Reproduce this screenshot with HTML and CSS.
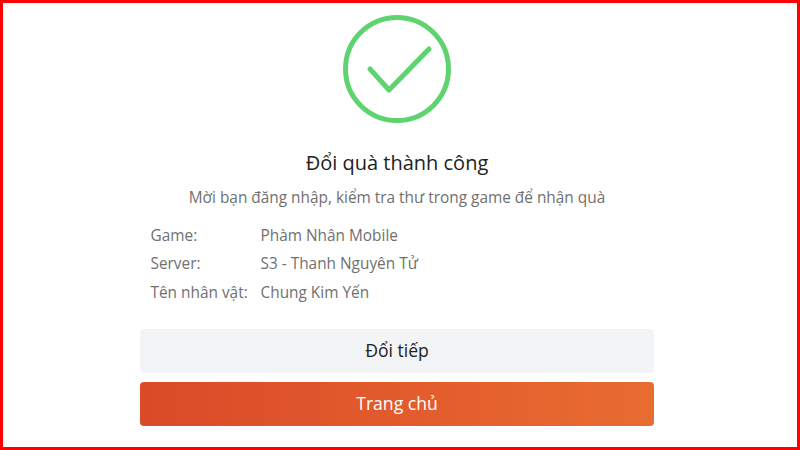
FILE: index.html
```html
<!DOCTYPE html>
<html lang="vi">
<head>
  <meta charset="UTF-8">
  <title>Đổi quà thành công</title>
  <link rel="stylesheet" href="styles.css">
</head>
<body>
  <div class="frame">
    <div class="panel">
      <svg class="tick" width="110" height="110" viewBox="0 0 110 110" aria-hidden="true">
        <circle cx="55" cy="55" r="51.5" fill="none" stroke="#5ed36f" stroke-width="5"/>
        <path d="M28 55 L47 76 L87 35" fill="none" stroke="#5ed36f" stroke-width="5" stroke-linecap="round" stroke-linejoin="round"/>
      </svg>
      <h1 class="title">Đổi quà thành công</h1>
      <p class="note">Mời bạn đăng nhập, kiểm tra thư trong game để nhận quà</p>
      <dl class="info">
        <dt>Game:</dt><dd>Phàm Nhân Mobile</dd>
        <dt>Server:</dt><dd>S3 - Thanh Nguyên Tử</dd>
        <dt>Tên nhân vật:</dt><dd>Chung Kim Yến</dd>
      </dl>
      <button class="btn btn-again">Đổi tiếp</button>
      <button class="btn btn-home">Trang chủ</button>
    </div>
  </div>
</body>
</html>
```

FILE: styles.css
```css
* { box-sizing: border-box; }
html, body { margin: 0; height: 100%; }
body { background: #fff; font-family: "Open Sans", "Noto Sans", sans-serif; }

.frame {
  width: 800px; height: 450px;
  border: 3px solid #f00;
  overflow: hidden;
}
.panel {
  width: 514px; margin-left: 137px; padding-top: 11px;
  display: flex; flex-direction: column; align-items: center;
}
.tick { display: block; }

.title {
  margin: 25px 0 0; font-size: 20px; line-height: 27px; font-weight: 400;
  color: #222;
}
.note {
  margin: 12px 0 0; font-size: 15.4px; line-height: 20px;
  color: #707070;
}
.info {
  align-self: stretch;
  display: grid; grid-template-columns: 110px 1fr;
  margin: 13.5px 0 0; padding-left: 10.5px;
  font-size: 15.4px; line-height: 28.5px; color: #707070;
}
.info dt, .info dd { margin: 0; }

.btn {
  display: block; width: 100%; height: 44px; padding: 0 0 2px;
  border: none; border-radius: 4px;
  font-family: inherit; font-size: 17.6px;
}
.btn-again { margin-top: 22px; background: #f3f4f5; color: #222; }
.btn-home {
  margin-top: 9px; color: #fff;
  background: linear-gradient(90deg, #da4a28 0%, #e96c31 100%);
}
```
